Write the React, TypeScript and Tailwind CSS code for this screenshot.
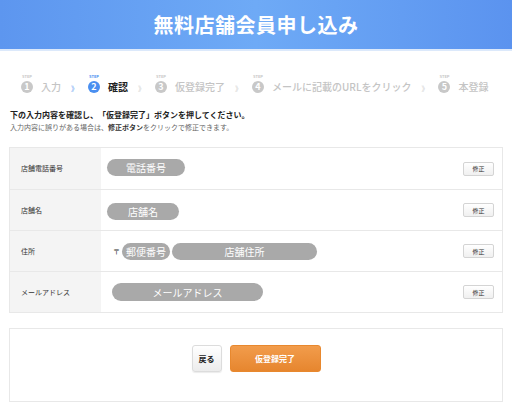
import { Fragment } from "react";

const steps = [
  { no: "1", label: "入力" },
  { no: "2", label: "確認", active: true },
  { no: "3", label: "仮登録完了" },
  { no: "4", label: "メールに記載のURLをクリック" },
  { no: "5", label: "本登録" },
];

function Pill({ text, width, className = "" }: { text: string; width: string; className?: string }) {
  return (
    <span
      className={`inline-flex h-[17px] items-center justify-center rounded-full bg-[#a9a9a9] text-[10px] text-white ${width} ${className}`}
    >
      {text}
    </span>
  );
}

function FixButton() {
  return (
    <button className="ml-auto mr-[8px] flex h-[14px] w-[31px] items-center justify-center rounded-[2px] border border-[#d4d4d4] bg-gradient-to-b from-white to-[#f0f0f0] text-[6px] text-[#333]">
      修正
    </button>
  );
}

export default function App() {
  const rows = [
    {
      label: "店舗電話番号",
      value: <Pill text="電話番号" width="w-[78px]" className="ml-[6px] -mt-[2px]" />,
    },
    {
      label: "店舗名",
      value: <Pill text="店舗名" width="w-[72px]" className="ml-[6px] mt-[3px]" />,
    },
    {
      label: "住所",
      value: (
        <div className="ml-[12px] flex items-center">
          <span className="mr-[2px] text-[7px] text-[#333]">〒</span>
          <Pill text="郵便番号" width="w-[48px]" />
          <Pill text="店舗住所" width="w-[145px]" className="ml-[2px]" />
        </div>
      ),
    },
    {
      label: "メールアドレス",
      value: <Pill text="メールアドレス" width="w-[151px]" className="ml-[11px] h-[18px]" />,
    },
  ];

  return (
    <div
      className="min-h-[405px] w-[512px] bg-white"
      style={{ fontFamily: '"Noto Sans CJK JP", "Noto Sans", sans-serif' }}
    >
      <header className="flex h-[51px] items-center justify-center border-b-[2px] border-[#dce9fb] bg-gradient-to-r from-[#5d96ef] via-[#6eaaf6] to-[#5b93ef]">
        <h1 className="text-[20px] font-bold tracking-[0.5px] text-white">無料店舗会員申し込み</h1>
      </header>

      <div className="flex h-[47px] items-end pb-[4px] pl-[21px]">
        {steps.map((s, i) => (
          <Fragment key={s.no}>
            {i > 0 && (
              <span
                className={`mx-[10px] mb-[1px] text-[7px] ${s.active ? "text-[#4a8ff0]" : "text-[#c8c8c8]"}`}
              >
                》
              </span>
            )}
            <div className="flex items-center">
              <div className="relative">
                <span
                  className={`absolute -top-[8px] left-[1px] text-[4px] font-bold ${s.active ? "text-[#4a8ff0]" : "text-[#c8c8c8]"}`}
                >
                  STEP
                </span>
                <span
                  className={`flex h-[12px] w-[12px] items-center justify-center rounded-full text-[9px] font-bold text-white ${s.active ? "bg-[#4a8ff0]" : "bg-[#c8c8c8]"}`}
                >
                  {s.no}
                </span>
              </div>
              <span
                className={`ml-[8px] text-[10px] ${s.active ? "font-bold text-[#222]" : "font-medium text-[#c4c4c4]"}`}
              >
                {s.label}
              </span>
            </div>
          </Fragment>
        ))}
      </div>

      <div className="mt-[11px] px-[10px]">
        <p className="text-[8px] font-bold leading-[12px] text-[#222]">
          下の入力内容を確認し、「仮登録完了」ボタンを押してください。
        </p>
        <p className="mt-[1px] text-[7px] leading-[10px] text-[#666]">
          入力内容に誤りがある場合は、<span className="font-bold text-[#333]">修正ボタン</span>
          をクリックで修正できます。
        </p>
      </div>

      <div className="mx-[9px] mt-[15px] border border-[#e8e8e8]">
        {rows.map((r, i) => (
          <div key={r.label} className={`flex h-[41px] ${i > 0 ? "border-t border-[#e8e8e8]" : ""}`}>
            <div className="flex w-[91px] items-center bg-[#f4f4f4] pl-[11px] text-[7px] text-[#333]">
              {r.label}
            </div>
            <div className="flex flex-1 items-center">
              {r.value}
              <FixButton />
            </div>
          </div>
        ))}
      </div>

      <div className="mx-[9px] mt-[15px] flex h-[74px] items-start justify-center gap-[8px] border border-[#e8e8e8] pt-[16px]">
        <button className="h-[27px] w-[30px] rounded-[3px] border border-[#dcdcdc] bg-gradient-to-b from-white to-[#ececec] text-[8px] font-bold text-[#222] shadow-[0_1px_1px_rgba(0,0,0,0.08)]">
          戻る
        </button>
        <button className="h-[27px] w-[91px] rounded-[3px] border border-[#e8882e] bg-gradient-to-b from-[#f29c4b] to-[#e6862e] text-[8px] font-bold text-white">
          仮登録完了
        </button>
      </div>
    </div>
  );
}
